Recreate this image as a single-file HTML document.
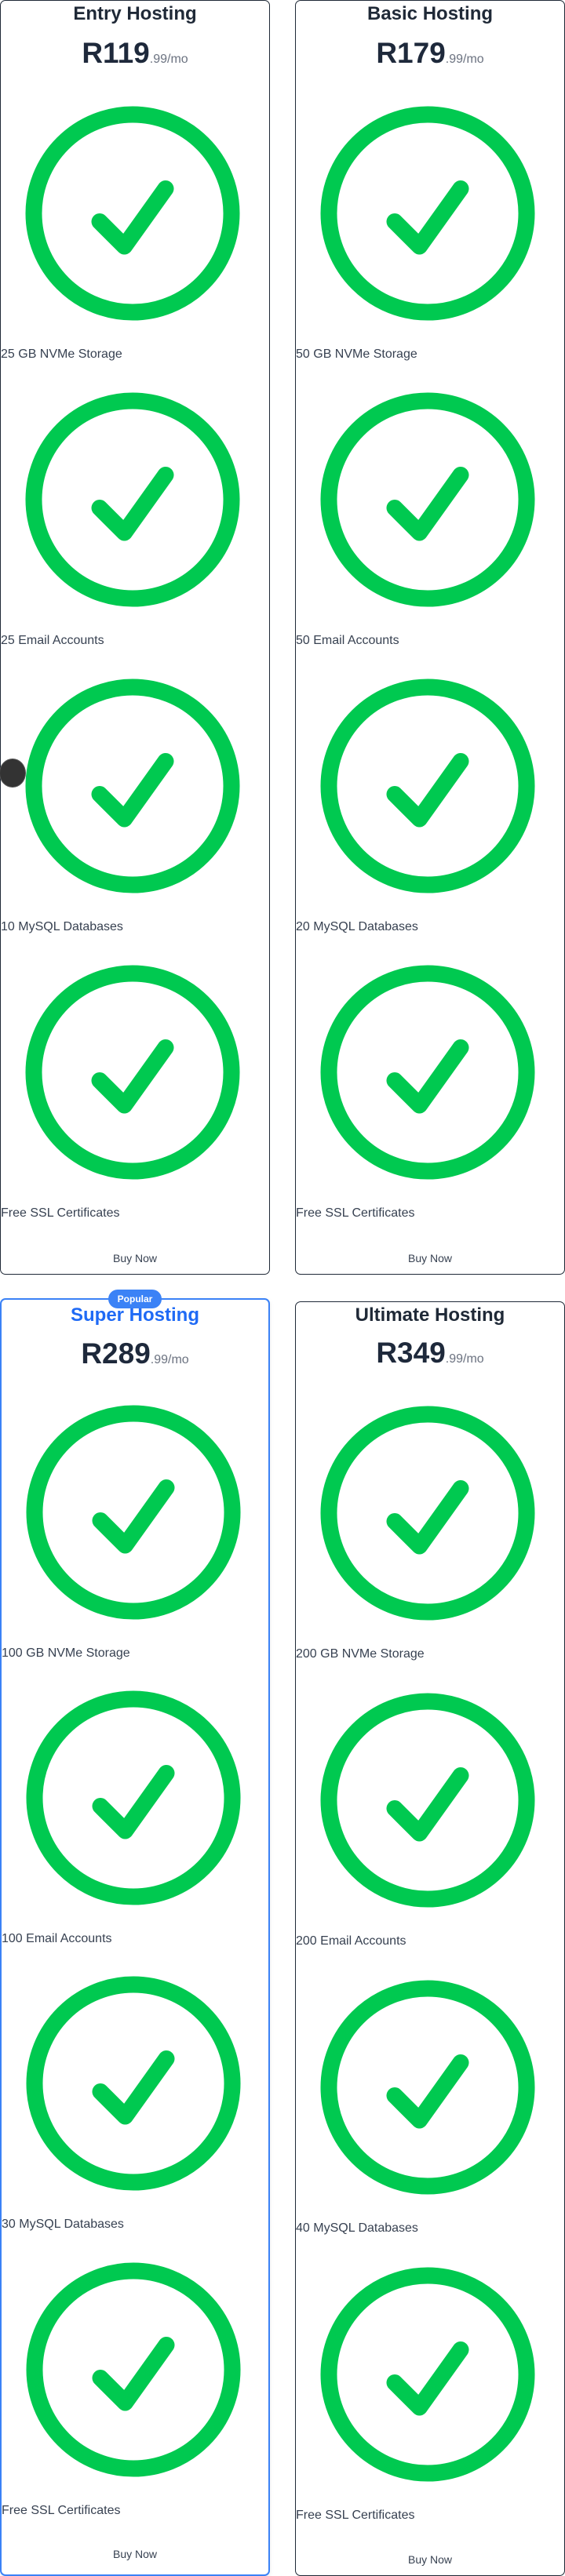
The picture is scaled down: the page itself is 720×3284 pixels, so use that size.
<!DOCTYPE html>
<html><head><meta charset="utf-8"><style>
*{box-sizing:border-box;margin:0;padding:0}
body{width:720px;height:3284px;background:#fff;font-family:"Liberation Sans",sans-serif;position:relative;overflow:hidden;color:#1f2937}
.card{position:absolute;width:344px;height:1625px;border:1px solid #1f2937;border-radius:7px;background:#fff}
.card.pop{border:2px solid #3b82f6;box-shadow:0 2px 6px rgba(0,0,0,.08)}
.t{position:absolute;top:0;left:0;right:0;text-align:center;font-weight:bold;font-size:24px;line-height:34px;color:#1f2937}
.pop .t{color:#1f6af5}
.p{position:absolute;top:44px;left:0;right:0;text-align:center;font-size:37px;font-weight:bold;line-height:46px;color:#1e293b}
.p span{font-size:16px;font-weight:normal;color:#6b7280}
.f{position:absolute;left:0;width:336px}
.f svg{display:block;width:336px;height:336px}
.f div{font-size:16px;line-height:24px;color:#374151;white-space:nowrap}
.b{position:absolute;left:0;right:0;bottom:10px;text-align:center;font-size:14px;line-height:20px;color:#374151}
.badge{position:absolute;left:138px;top:1644px;width:68px;height:24px;border-radius:12px;background:#3b82f6;color:#fff;font-weight:bold;font-size:12px;line-height:24px;text-align:center;z-index:2}
.dot{position:absolute;left:-1px;top:967px;width:34px;height:37px;border-radius:50%;background:#333;border:1px solid #555;z-index:3}
</style></head><body>
<svg width="0" height="0" style="position:absolute"><defs><symbol id="ck" viewBox="0 0 24 24"><path d="M9 12.75 11.25 15 15 9.75M21 12a9 9 0 1 1-18 0 9 9 0 0 1 18 0Z" fill="none" stroke="#00c950" stroke-width="1.5" stroke-linecap="round" stroke-linejoin="round"/></symbol></defs></svg>

<div class="card" style="left:0;top:0">
<div class="t">Entry Hosting</div>
<div class="p">R119<span>.99/mo</span></div>
<div class="f" style="top:103px"><svg><use href="#ck"/></svg><div>25 GB NVMe Storage</div></div>
<div class="f" style="top:468px"><svg><use href="#ck"/></svg><div>25 Email Accounts</div></div>
<div class="f" style="top:833px"><svg><use href="#ck"/></svg><div>10 MySQL Databases</div></div>
<div class="f" style="top:1198px"><svg><use href="#ck"/></svg><div>Free SSL Certificates</div></div>
<div class="b">Buy Now</div>
</div>

<div class="card" style="left:376px;top:0">
<div class="t">Basic Hosting</div>
<div class="p">R179<span>.99/mo</span></div>
<div class="f" style="top:103px"><svg><use href="#ck"/></svg><div>50 GB NVMe Storage</div></div>
<div class="f" style="top:468px"><svg><use href="#ck"/></svg><div>50 Email Accounts</div></div>
<div class="f" style="top:833px"><svg><use href="#ck"/></svg><div>20 MySQL Databases</div></div>
<div class="f" style="top:1198px"><svg><use href="#ck"/></svg><div>Free SSL Certificates</div></div>
<div class="b">Buy Now</div>
</div>

<div class="dot"></div>

<div class="badge">Popular</div>
<div class="card pop" style="left:0;top:1655px;height:1629px">
<div class="t" style="top:3px">Super Hosting</div>
<div class="p" style="top:46px">R289<span>.99/mo</span></div>
<div class="f" style="top:103px"><svg><use href="#ck"/></svg><div>100 GB NVMe Storage</div></div>
<div class="f" style="top:467px"><svg><use href="#ck"/></svg><div>100 Email Accounts</div></div>
<div class="f" style="top:831px"><svg><use href="#ck"/></svg><div>30 MySQL Databases</div></div>
<div class="f" style="top:1196px"><svg><use href="#ck"/></svg><div>Free SSL Certificates</div></div>
<div class="b" style="bottom:16px">Buy Now</div>
</div>

<div class="card" style="left:376px;top:1659px;height:1625px">
<div class="t">Ultimate Hosting</div>
<div class="p" style="top:42px">R349<span>.99/mo</span></div>
<div class="f" style="top:101px"><svg><use href="#ck"/></svg><div>200 GB NVMe Storage</div></div>
<div class="f" style="top:467px"><svg><use href="#ck"/></svg><div>200 Email Accounts</div></div>
<div class="f" style="top:833px"><svg><use href="#ck"/></svg><div>40 MySQL Databases</div></div>
<div class="f" style="top:1199px"><svg><use href="#ck"/></svg><div>Free SSL Certificates</div></div>
<div class="b">Buy Now</div>
</div>
</body></html>
